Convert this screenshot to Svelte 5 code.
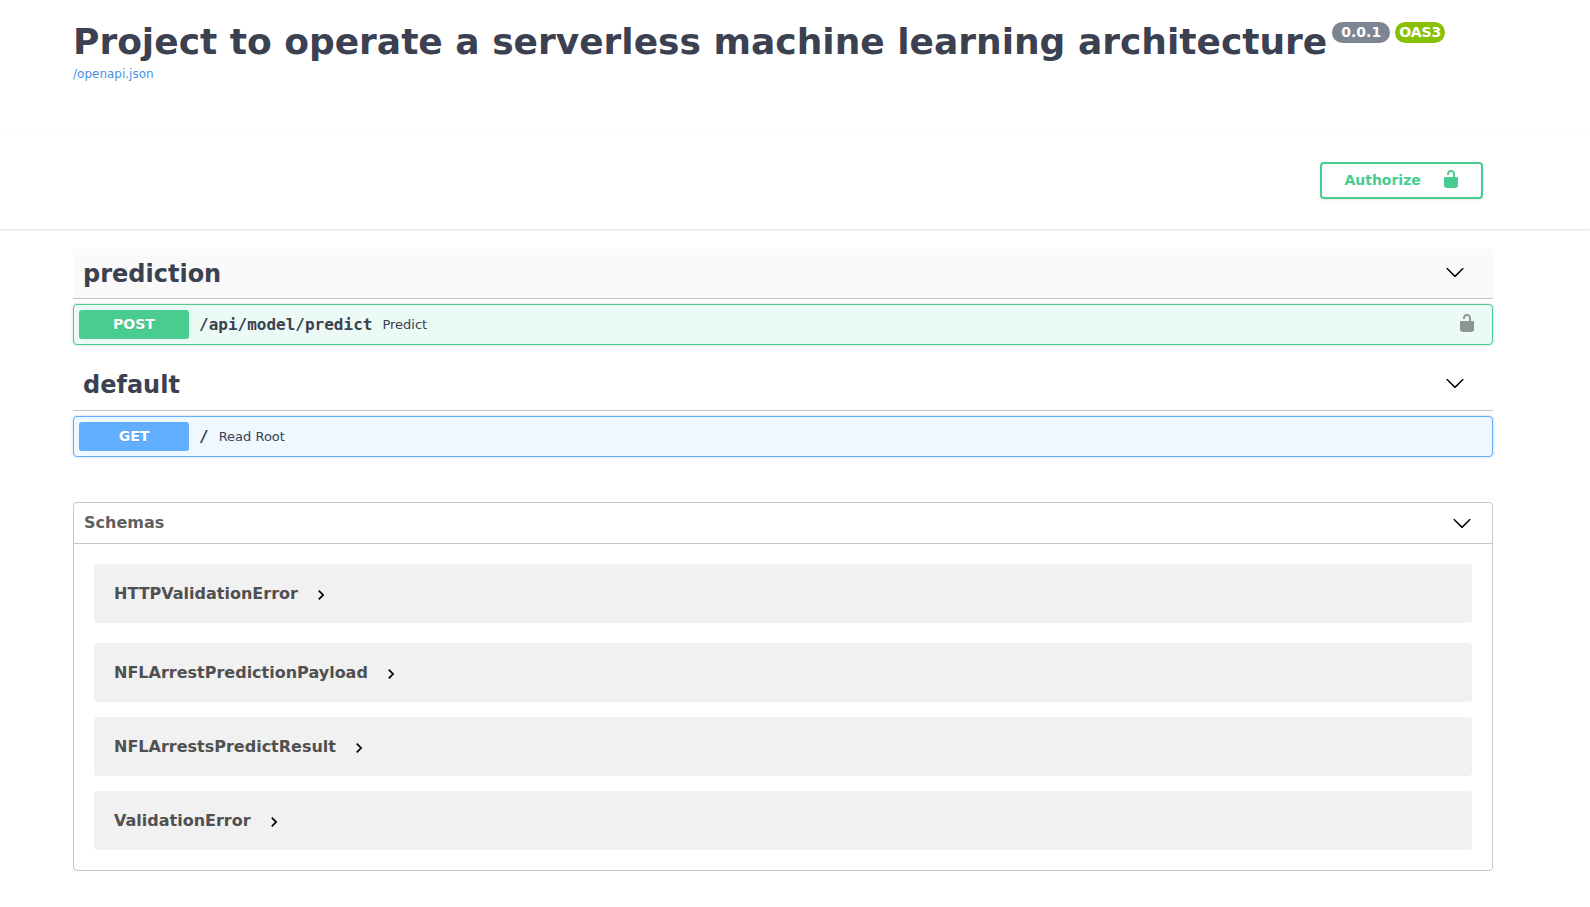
<script>
  const sections = [
    { tag: 'prediction', method: 'post', path: '/api/model/predict', summary: 'Predict', locked: true, hover: true },
    { tag: 'default', method: 'get', path: '/', summary: 'Read Root', locked: false, hover: false }
  ];
  const models = ['HTTPValidationError', 'NFLArrestPredictionPayload', 'NFLArrestsPredictResult', 'ValidationError'];
</script>

{#snippet lock()}
  <svg class="lock" width="20" height="20" viewBox="0 0 20 20" aria-hidden="true">
    <path d="M15.8 8H14V5.6C14 2.703 12.665 1 10 1 7.334 1 6 2.703 6 5.6V6h2v-.801C8 3.754 8.797 3 10 3c1.203 0 2 .754 2 2.199V8H4c-.553 0-1 .646-1 1.199V17c0 .549.428 1.139.951 1.307l1.197.387C5.672 18.861 6.55 19 7.1 19h5.8c.549 0 1.428-.139 1.951-.307l1.196-.387c.524-.167.953-.757.953-1.306V9.199C17 8.646 16.352 8 15.8 8z" />
  </svg>
{/snippet}

{#snippet arrow()}
  <svg class="arrow" width="20" height="20" viewBox="0 0 20 20" aria-hidden="true">
    <path d="M17.418 6.109c.272-.268.709-.268.979 0s.271.701 0 .969l-7.908 7.83c-.27.268-.707.268-.979 0l-7.908-7.83c-.27-.268-.27-.701 0-.969.271-.268.709-.268.979 0L10 13.25l7.418-7.141z" />
  </svg>
{/snippet}

<div class="page">
  <header class="info">
    <div class="title-row">
      <h1>Project to operate a serverless machine learning architecture</h1>
      <span class="badge version">0.0.1</span>
      <span class="badge oas">OAS3</span>
    </div>
    <a href="#openapi">/openapi.json</a>
  </header>

  <div class="scheme">
    <button class="authorize"><span>Authorize</span>{@render lock()}</button>
  </div>

  <main>
    {#each sections as s}
      <section class="tag-section">
        <h3 class:hover={s.hover}><span>{s.tag}</span>{@render arrow()}</h3>
        <div class="op {s.method}">
          <span class="method">{s.method.toUpperCase()}</span>
          <span class="path">{s.path}</span>
          <span class="summary">{s.summary}</span>
          {#if s.locked}{@render lock()}{/if}
        </div>
      </section>
    {/each}

    <section class="models">
      <h4><span>Schemas</span>{@render arrow()}</h4>
      <div class="list">
        {#each models as m}
          <div class="model">
            <span>{m}</span>
            <svg width="20" height="20" viewBox="0 0 24 24" aria-hidden="true"><path d="M10 6L8.59 7.41 13.17 12l-4.58 4.59L10 18l6-6z" /></svg>
          </div>
        {/each}
      </div>
    </section>
  </main>
</div>

<style>
  :global(body) { margin: 0; background: #fff; }
  .page {
    height: 907px;
    overflow: hidden;
    box-sizing: border-box;
    font-family: "DejaVu Sans", sans-serif;
    color: #3b4151;
    background: #fff;
  }
  .page :global(*) { box-sizing: border-box; }
  svg { display: block; flex: none; }
  h1, h3, h4 { margin: 0; }

  .info { height: 132px; padding: 21px 73px 0; }
  .title-row { display: flex; align-items: flex-start; height: 45px; }
  h1 { font-size: 36px; line-height: 42px; white-space: nowrap; }
  .badge {
    height: 21px;
    margin-top: 1px;
    margin-left: 5px;
    border-radius: 57px;
    color: #fff;
    font-size: 14px;
    font-weight: 700;
    line-height: 20px;
    text-align: center;
  }
  .version { width: 58px; background: #7d8492; }
  .oas { width: 50px; background: #89bf04; }
  a { display: block; width: max-content; font-size: 12px; line-height: 17px; color: #4990e2; text-decoration: none; }

  .scheme {
    display: flex;
    justify-content: flex-end;
    height: 97px;
    padding: 30px 107px 0 0;
    background: #fff;
    box-shadow: 0 1px 2px rgba(0, 0, 0, .15);
  }
  .authorize {
    display: flex;
    align-items: center;
    justify-content: space-between;
    width: 163px;
    height: 37px;
    padding: 0 20px 2px 22.4px;
    border: 2px solid #49cc90;
    border-radius: 4px;
    background: #fff;
    box-shadow: 0 1px 2px rgba(0, 0, 0, .1);
    color: #49cc90;
    font: 700 14px "DejaVu Sans", sans-serif;
  }
  .authorize svg { margin-bottom: 1px; fill: #49cc90; }

  main { width: 1420px; margin-left: 73px; padding-top: 20px; }
  .tag-section { height: 111px; }
  .tag-section + .tag-section { height: 113px; }
  h3 {
    display: flex;
    align-items: flex-start;
    justify-content: space-between;
    height: 50px;
    padding: 0 28px 0 10px;
    border-bottom: 1px solid rgba(59, 65, 81, .3);
    font-size: 24px;
  }
  h3 span { margin-top: 10.5px; line-height: 28px; }
  h3 .arrow, h3 :global(.arrow) { margin-top: 13px; }
  .tag-section + .tag-section h3 { height: 51px; }
  h3.hover { background: #fafafa; }
  .op {
    display: flex;
    align-items: center;
    height: 41px;
    margin-top: 5px;
    padding: 0 15px 0 5px;
    border: 1px solid;
    border-radius: 4px;
    box-shadow: 0 0 3px rgba(0, 0, 0, .19);
  }
  .post { border-color: #49cc90; background: #ebfaf4; }
  .get { border-color: #61affe; background: #eff7ff; }
  .method {
    width: 110px;
    height: 29px;
    border-radius: 3px;
    color: #fff;
    font-size: 14px;
    font-weight: 700;
    line-height: 28px;
    text-align: center;
    text-shadow: 0 1px 0 rgba(0, 0, 0, .1);
  }
  .post .method { background: #49cc90; }
  .get .method { background: #61affe; }
  .path { margin-left: 10px; font: 600 16px "DejaVu Sans Mono", monospace; }
  .summary { margin-left: 10px; font-size: 13px; }
  .op .lock { margin: 0 0 3px auto; opacity: .4; }

  .models { height: 369px; margin-top: 29px; border: 1px solid rgba(59, 65, 81, .3); border-radius: 4px; }
  h4 {
    display: flex;
    align-items: center;
    justify-content: space-between;
    height: 41px;
    padding: 0 20px 0 10px;
    border-bottom: 1px solid rgba(59, 65, 81, .3);
    color: #606060;
    font-size: 16px;
  }
  h4 span { margin-bottom: 2px; }
  .list { padding: 20px 20px 0; }
  .model {
    display: flex;
    align-items: center;
    height: 59px;
    margin-bottom: 15px;
    padding: 0 20px;
    border-radius: 4px;
    background: #f1f1f1;
    color: #505050;
    font-size: 16px;
    font-weight: 700;
  }
  .model:first-child { margin-bottom: 20px; }
  .model svg { margin: 3px 0 0 13px; }
</style>
